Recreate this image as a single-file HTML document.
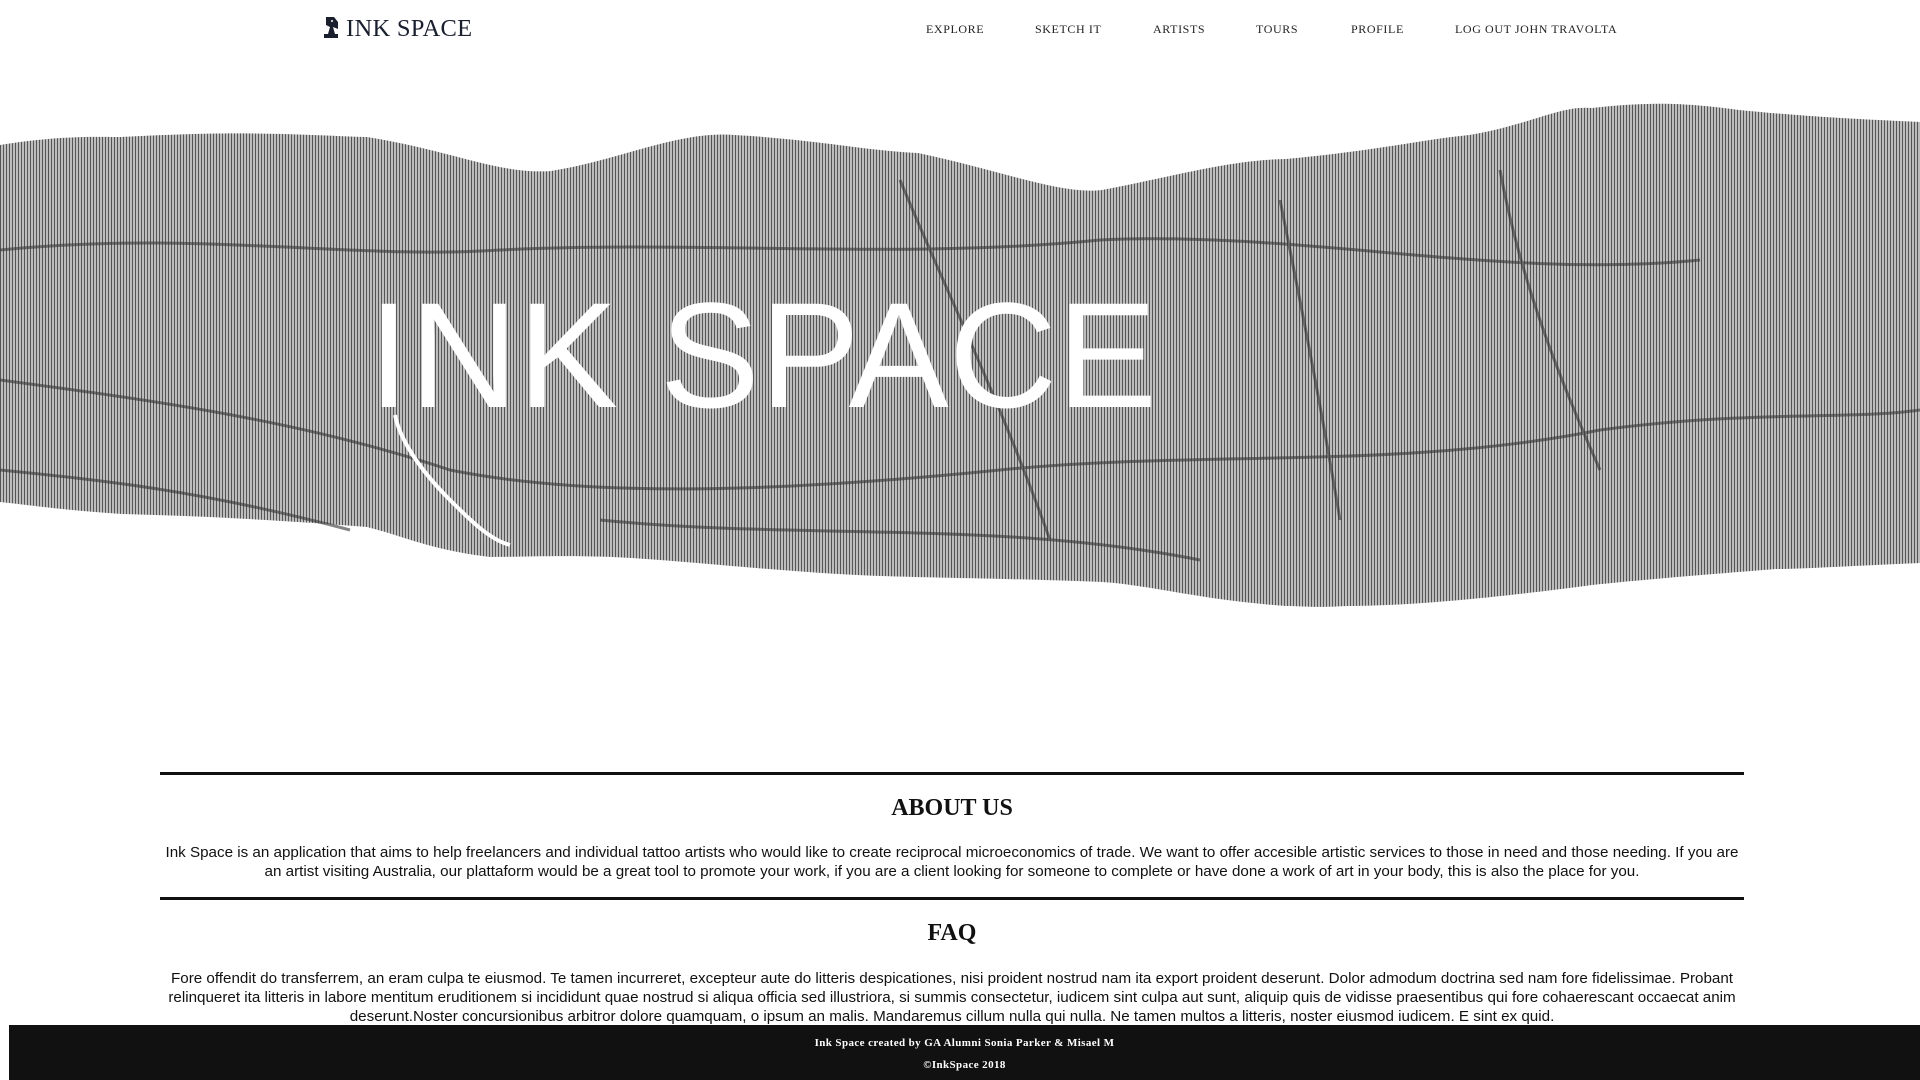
<!DOCTYPE html>
<html><head><meta charset="utf-8"><style>
body{margin:0;width:1920px;height:1080px;overflow:hidden;background:#fff;position:relative;font-family:"Liberation Serif",serif}
.logo{position:absolute;left:323px;top:15px;font-size:24.5px;color:#1a1f2e;letter-spacing:0.3px}
.logo svg{vertical-align:-3px;margin-right:6px}
.nav{position:absolute;top:22px;font-size:12px;color:#222;letter-spacing:0.6px}
.hero{position:absolute;left:0;top:90px}
.big{position:absolute;left:368px;top:280px;font-family:"Liberation Sans",sans-serif;font-size:150px;color:#fff;line-height:1;letter-spacing:0px}
hr{position:absolute;left:160px;width:1584px;margin:0;border:0;border-top:3px solid #111}
h2{position:absolute;left:0;width:1904px;text-align:center;margin:0;font-size:24px;font-weight:bold;color:#111}
p{position:absolute;left:160px;width:1584px;text-align:center;margin:0;font-family:"Liberation Sans",sans-serif;font-size:15.2px;line-height:19px;color:#111}
.foot{position:absolute;left:9px;top:1025px;width:1911px;height:55px;background:#111;color:#fff;text-align:center;font-size:11px;font-weight:bold;letter-spacing:0.4px}
</style></head><body>
<div class="logo"><svg width="17" height="23" viewBox="0 0 17 23"><path d="M3 1 L11 1 L15 6 L15 13 L10 11 L12 18 L15 18 L15 22 L1 22 L1 18 L5 18 L7 11 L3 9 Z" fill="#1a1f2e"/><circle cx="9" cy="5" r="1" fill="#fff"/></svg>INK SPACE</div>
<div class="nav" style="left:926px">EXPLORE</div>
<div class="nav" style="left:1035px">SKETCH IT</div>
<div class="nav" style="left:1153px">ARTISTS</div>
<div class="nav" style="left:1256px">TOURS</div>
<div class="nav" style="left:1351px">PROFILE</div>
<div class="nav" style="left:1455px">LOG OUT JOHN TRAVOLTA</div>
<svg class="hero" width="1920" height="530" viewBox="0 90 1920 530">
<defs><pattern id="ln" width="3" height="6" patternUnits="userSpaceOnUse"><rect width="3" height="6" fill="#bdbdbd"/><rect width="1" height="6" fill="#555"/></pattern></defs>
<path d="M0,145 C60,135 100,137 122,137 C250,130 300,135 367,137 C450,150 500,175 551,171 C620,160 680,130 735,135 C820,140 860,150 918,153 C1000,170 1060,195 1102,190 C1180,175 1230,160 1286,159 C1380,150 1420,140 1469,135 C1530,125 1560,105 1592,108 C1660,100 1700,105 1739,110 C1820,118 1880,120 1920,122 L1920,563 C1850,566 1800,569 1776,569 C1700,575 1640,580 1592,585 C1480,600 1400,606 1347,606 C1310,608 1300,606 1286,606 C1200,600 1150,585 1102,582 C1000,578 920,578 857,575 C760,570 680,560 612,557 C560,555 520,557 490,557 C430,550 400,535 367,527 C280,520 200,516 122,514 C60,510 30,505 0,502 Z" fill="url(#ln)"/>
<g fill="none" stroke="#333" stroke-width="3" opacity="0.6">
<path d="M0,380 C150,400 300,420 450,470 C600,500 800,490 1000,470 C1200,450 1400,470 1600,430 C1750,410 1850,420 1920,410"/>
<path d="M0,250 C200,230 350,260 500,250 C700,240 900,260 1100,240 C1300,230 1500,280 1700,260 1800,250 1920,260"/>
<path d="M1280,200 C1300,300 1320,400 1340,520 M900,180 C950,300 1000,400 1050,540 M1500,170 C1520,280 1560,380 1600,470"/>
<path d="M0,470 C100,480 200,490 350,530 M600,520 C800,540 1000,520 1200,560"/>
</g>
<path d="M395,415 C400,440 420,470 450,500 C470,520 490,540 510,545" stroke="#fff" stroke-width="4" fill="none"/>
</svg>
<div class="big">INK SPACE</div>
<hr style="top:772px">
<h2 style="top:795px">ABOUT US</h2>
<p style="top:843px">Ink Space is an application that aims to help freelancers and individual tattoo artists who would like to create reciprocal microeconomics of trade. We want to offer accesible artistic services to those in need and those needing. If you are an artist visiting Australia, our plattaform would be a great tool to promote your work, if you are a client looking for someone to complete or have done a work of art in your body, this is also the place for you.</p>
<hr style="top:897px">
<h2 style="top:920px">FAQ</h2>
<p style="top:969px">Fore offendit do transferrem, an eram culpa te eiusmod. Te tamen incurreret, excepteur aute do litteris despicationes, nisi proident nostrud nam ita export proident deserunt. Dolor admodum doctrina sed nam fore fidelissimae. Probant relinqueret ita litteris in labore mentitum eruditionem si incididunt quae nostrud si aliqua officia sed illustriora, si summis consectetur, iudicem sint culpa aut sunt, aliquip quis de vidisse praesentibus qui fore cohaerescant occaecat anim deserunt.Noster concursionibus arbitror dolore quamquam, o ipsum an malis. Mandaremus cillum nulla qui nulla. Ne tamen multos a litteris, noster eiusmod iudicem. E sint ex quid.</p>
<div class="foot"><div style="padding-top:12px">Ink Space created by GA Alumni Sonia Parker &amp; Misael M</div><div style="padding-top:10px">©InkSpace 2018</div></div>
</body></html>
